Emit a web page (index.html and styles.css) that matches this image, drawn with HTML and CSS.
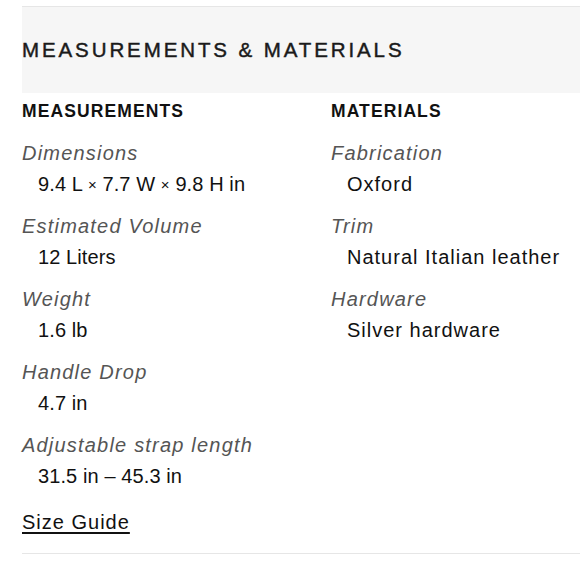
FILE: index.html
```html
<!DOCTYPE html>
<html>
<head>
<meta charset="utf-8">
<link rel="stylesheet" href="styles.css">
</head>
<body>
<section class="panel">
  <h2 class="panel-title">MEASUREMENTS &amp; MATERIALS</h2>
  <div class="cols">
    <div class="col col-left">
      <h3 class="col-title">MEASUREMENTS</h3>
      <dl class="specs">
        <div class="spec"><dt>Dimensions</dt><dd class="num">9.4 L <span class="times">×</span> 7.7 W <span class="times">×</span> 9.8 H in</dd></div>
        <div class="spec"><dt>Estimated Volume</dt><dd class="num">12 Liters</dd></div>
        <div class="spec"><dt>Weight</dt><dd class="num">1.6 lb</dd></div>
        <div class="spec"><dt>Handle Drop</dt><dd class="num">4.7 in</dd></div>
        <div class="spec"><dt>Adjustable strap length</dt><dd class="num">31.5 in – 45.3 in</dd></div>
      </dl>
      <a class="size-guide" href="#">Size Guide</a>
    </div>
    <div class="col col-right">
      <h3 class="col-title">MATERIALS</h3>
      <dl class="specs">
        <div class="spec"><dt>Fabrication</dt><dd>Oxford</dd></div>
        <div class="spec"><dt>Trim</dt><dd>Natural Italian leather</dd></div>
        <div class="spec"><dt>Hardware</dt><dd>Silver hardware</dd></div>
      </dl>
    </div>
  </div>
</section>
</body>
</html>
```
FILE: styles.css
```css
html, body {
  margin: 0;
  padding: 0;
  background: #fff;
}
body {
  font-family: "Liberation Sans", Arial, sans-serif;
  color: #111;
}
.panel {
  margin-left: 22px;
  margin-top: 6px;
  border-top: 1px solid #e6e6e6;
  border-bottom: 1px solid #e6e6e6;
  padding-bottom: 16px;
}
.panel-title {
  margin: 0;
  background: #f6f6f6;
  height: 86px;
  display: flex;
  align-items: center;
  font-size: 20.5px;
  font-weight: 400;
  letter-spacing: 2.9px;
  color: #1a1a1a;
  -webkit-text-stroke: 0.45px #1a1a1a;
}
.cols {
  display: grid;
  grid-template-columns: 309px 1fr;
}
.col-title {
  margin: 7px 0 0;
  font-size: 17.5px;
  font-weight: 700;
  line-height: 22px;
  letter-spacing: 1.1px;
  color: #111;
}
.specs {
  margin: 0;
  padding-top: 17px;
  display: flex;
  flex-direction: column;
  gap: 13px;
}
.spec dt {
  font-style: italic;
  color: #555;
  font-size: 20px;
  line-height: 29px;
  letter-spacing: 1.2px;
}
.spec dd {
  margin: 2px 0 0 16px;
  font-size: 20px;
  line-height: 29px;
  letter-spacing: 1px;
  color: #111;
}
.spec dd.num {
  letter-spacing: 0.1px;
}
.times {
  font-size: 15px;
  line-height: 1;
  vertical-align: 1px;
}
.size-guide {
  display: inline-block;
  margin-top: 17px;
  font-size: 20px;
  line-height: 29px;
  color: #111;
  text-decoration: underline;
  text-underline-offset: 3px;
  letter-spacing: 1px;
}
```
